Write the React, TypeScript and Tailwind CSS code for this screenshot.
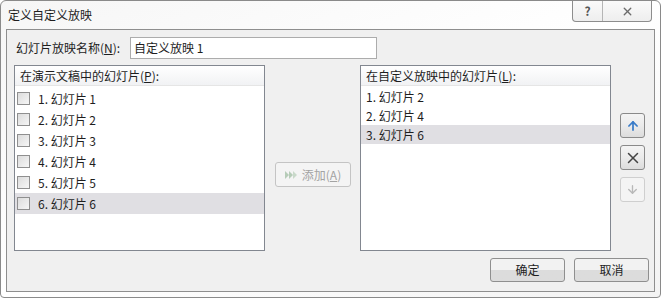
import { ArrowUp, ArrowDown, X } from "lucide-react";

const font = { fontFamily: '"Microsoft YaHei", "Noto Sans CJK SC", "Liberation Sans", sans-serif' };

const sourceSlides = ["1. 幻灯片 1", "2. 幻灯片 2", "3. 幻灯片 3", "4. 幻灯片 4", "5. 幻灯片 5", "6. 幻灯片 6"];
const showSlides = ["1. 幻灯片 2", "2. 幻灯片 4", "3. 幻灯片 6"];

const ListHeader = ({ children }: { children: React.ReactNode }) => (
  <div className="h-[20px] flex items-center pl-[5px] border-b border-[#e5e5e5] bg-gradient-to-b from-white to-[#f1f2f4]">
    {children}
  </div>
);

const SideButton = ({ children, disabled }: { children: React.ReactNode; disabled?: boolean }) => (
  <div
    className={`w-[25px] h-[25px] rounded-[3px] border flex items-center justify-center ${
      disabled
        ? "border-[#cfcfcf] bg-[#f4f4f4]"
        : "border-[#8a8a8a] bg-gradient-to-b from-[#f4f4f4] via-[#ebebeb] to-[#dcdcdc]"
    }`}
  >
    {children}
  </div>
);

const DialogButton = ({ label }: { label: string }) => (
  <div className="w-[75px] h-[24px] rounded-[3px] border border-[#8f8f8f] bg-gradient-to-b from-[#f2f2f2] from-50% to-[#dcdcdc] to-50% flex items-center justify-center">
    {label}
  </div>
);

export default function App() {
  return (
    <div className="w-[661px] h-[300px] bg-white text-[12px] text-[#1e1e1e]" style={font}>
      <div className="w-[661px] h-[298px] border border-[#8a8a8a] rounded-t-[6px] rounded-b-[4px] bg-gradient-to-br from-[#f6f6f6] via-white to-[#f3f3f3] flex flex-col">
        {/* title bar */}
        <div className="h-[28px] flex items-start">
          <div className="pl-[7px] pt-[5px] text-[12px]">定义自定义放映</div>
          <div className="ml-auto mr-[8px] flex h-[21px] border border-t-0 border-[#8d8d8d] rounded-b-[4px] bg-gradient-to-b from-[#fafafa] to-[#eeeeee]">
            <div className="w-[30px] flex items-center justify-center border-r border-[#b5b5b5] text-[#555] text-[12px] font-bold">?</div>
            <div className="w-[48px] flex items-center justify-center">
              <X size={13} strokeWidth={2.5} className="text-[#6b6b6b]" />
            </div>
          </div>
        </div>

        {/* client area */}
        <div className="mx-[5px] h-[263px] border border-[#8e8e8e] bg-[#f0f0f0] flex flex-col pl-[7px] pr-[4px]">
          <div className="flex items-center mt-[7px] h-[22px]">
            <span className="w-[116px] pl-[2px]">
              幻灯片放映名称(<span className="underline">N</span>):
            </span>
            <div className="w-[247px] h-[22px] border border-[#acacac] bg-white flex items-center pl-[3px]">
              自定义放映 1
            </div>
          </div>

          <div className="flex mt-[6px] h-[186px]">
            <div className="w-[251px] border border-[#828790] bg-white flex flex-col">
              <ListHeader>
                在演示文稿中的幻灯片(<span className="underline">P</span>):
              </ListHeader>
              <div className="pt-[2px]">
                {sourceSlides.map((s, i) => (
                  <div
                    key={s}
                    className={`h-[21px] flex items-center pl-[2px] ${i === 5 ? "bg-[#e0dfe3]" : ""}`}
                  >
                    <div className="w-[13px] h-[13px] border border-[#8f8f8f] bg-gradient-to-br from-[#dcdcdc] to-[#f6f6f6] mr-[8px]" />
                    {s}
                  </div>
                ))}
              </div>
            </div>

            <div className="w-[95px] flex items-center justify-center pt-[33px]">
              <div className="w-[76px] h-[25px] rounded-[3px] border border-[#c4c4c4] bg-[#f4f4f4] flex items-center justify-center text-[#a3a3a3]">
                <svg width="14" height="10" viewBox="0 0 14 10" className="mr-[4px]">
                  <path d="M1 1 L5 5 L1 9 Z" fill="#b6ccb8" />
                  <path d="M5 1 L9 5 L5 9 Z" fill="#b6ccb8" />
                  <path d="M9 1 L13 5 L9 9 Z" fill="#c9d9ca" />
                </svg>
                添加(<span className="underline">A</span>)
              </div>
            </div>

            <div className="w-[251px] border border-[#828790] bg-white flex flex-col">
              <ListHeader>
                在自定义放映中的幻灯片(<span className="underline">L</span>):
              </ListHeader>
              <div className="pt-[1px]">
                {showSlides.map((s, i) => (
                  <div
                    key={s}
                    className={`h-[19px] flex items-center pl-[5px] ${i === 2 ? "bg-[#e0dfe3]" : ""}`}
                  >
                    {s}
                  </div>
                ))}
              </div>
            </div>

            <div className="ml-[9px] flex flex-col gap-[7px] pt-[48px]">
              <SideButton>
                <ArrowUp size={14} strokeWidth={3} className="text-[#3a7cc8]" />
              </SideButton>
              <SideButton>
                <X size={18} strokeWidth={2} className="text-[#444]" />
              </SideButton>
              <SideButton disabled>
                <ArrowDown size={13} strokeWidth={2.5} className="text-[#b8b8b8]" />
              </SideButton>
            </div>
          </div>

          <div className="flex justify-end gap-[9px] mt-[7px] pr-[1px]">
            <DialogButton label="确定" />
            <DialogButton label="取消" />
          </div>
        </div>
      </div>
    </div>
  );
}
